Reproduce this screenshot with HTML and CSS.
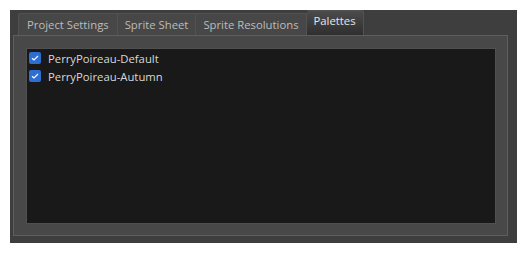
FILE: index.html
```html
<!DOCTYPE html>
<html lang="en">
<head>
    <meta charset="UTF-8">
    <title>Palettes</title>
    <link rel="stylesheet" href="styles.css">
</head>
<body>
    <div class="window">
        <div class="tabs">
            <div class="tab">Project Settings</div>
            <div class="tab">Sprite Sheet</div>
            <div class="tab">Sprite Resolutions</div>
            <div class="tab active">Palettes</div>
        </div>
        <div class="pane">
            <div class="list">
                <label class="item">
                    <span class="check">
                        <svg width="8" height="6" viewBox="0 0 8 6"><path d="M1 3.2 L3 5 L7 1" fill="none" stroke="#fff" stroke-width="1.2"/></svg>
                    </span>
                    PerryPoireau-Default
                </label>
                <label class="item">
                    <span class="check">
                        <svg width="8" height="6" viewBox="0 0 8 6"><path d="M1 3.2 L3 5 L7 1" fill="none" stroke="#fff" stroke-width="1.2"/></svg>
                    </span>
                    PerryPoireau-Autumn
                </label>
            </div>
        </div>
    </div>
</body>
</html>
```

FILE: styles.css
```css
body {
    margin: 0;
    background-color: #fff;
    font-family: "Open Sans", "Noto Sans", sans-serif;
    font-size: 11.3px;
}
.window {
    margin: 10px;
    width: 507px;
    height: 233px;
    box-sizing: border-box;
    background-color: #3e3e3e;
    padding: 0 9px 7px 3px;
    display: flex;
    flex-direction: column;
}
.tabs {
    display: flex;
    align-items: flex-end;
    height: 25px;
    padding-left: 5px;
}
.tab {
    height: 22px;
    box-sizing: border-box;
    padding: 3px 7px 0;
    border: 1px solid #525252;
    border-bottom: none;
    border-left: none;
    background-color: #474747;
    color: #bcbcbc;
    white-space: nowrap;
}
.tab:first-child {
    padding: 3px 8px 0;
    border-left: 1px solid #525252;
    border-radius: 2px 0 0 0;
}
.tab.active {
    height: 25px;
    padding-top: 2px;
    border-radius: 2px 2px 0 0;
    background: linear-gradient(#4b4b4b, #2f2f2f);
    color: #e6e6e6;
}
.pane {
    flex: 1;
    border: 1px solid #5e5e5e;
    background-color: #484848;
    padding: 12px 11px 11px 12px;
    display: flex;
}
.list {
    flex: 1;
    background-color: #191919;
    border: 1px solid #505050;
    padding: 0 2px;
}
.item {
    display: flex;
    align-items: center;
    height: 18px;
    gap: 7px;
    color: #d8d8d8;
}
.check {
    width: 12px;
    height: 12px;
    border-radius: 2px;
    background-color: #2c6ed2;
    display: flex;
    align-items: center;
    justify-content: center;
}
```
